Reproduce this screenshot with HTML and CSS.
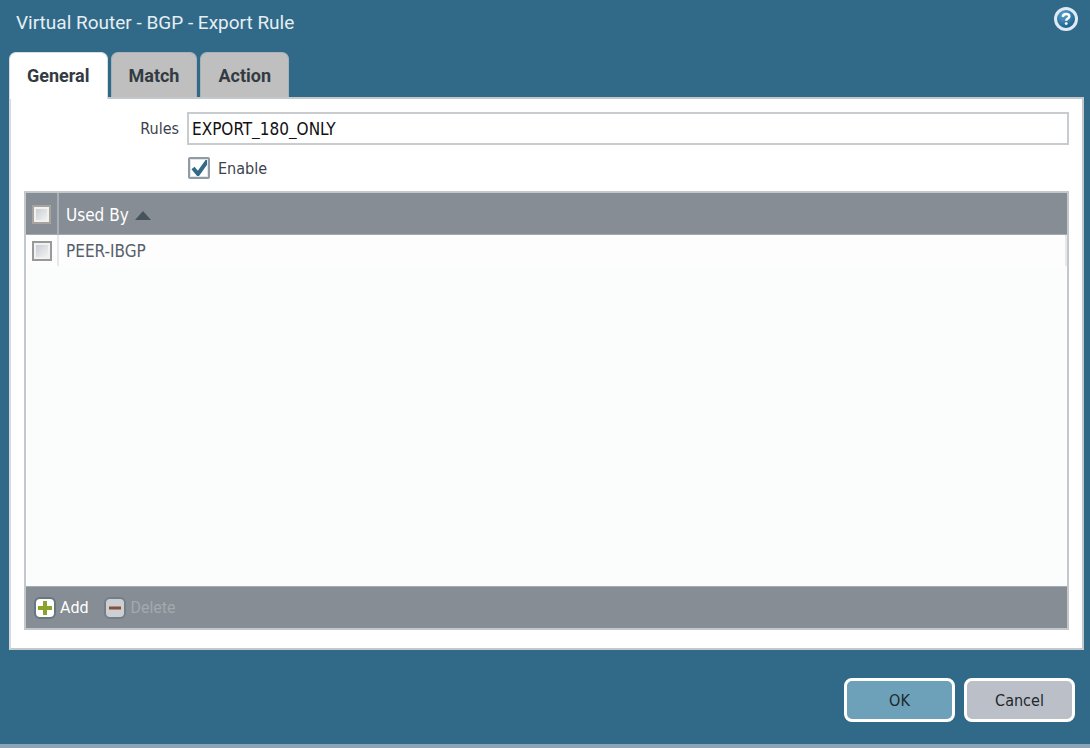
FILE: index.html
```html
<!DOCTYPE html>
<html lang="en">
<head>
    <meta charset="UTF-8">
    <meta name="viewport" content="width=device-width, initial-scale=1.0">
    <title>Virtual Router - BGP - Export Rule</title>
    <link rel="stylesheet" href="styles.css">
</head>
<body>
    <form class="dialog">
        <header class="dialog-header">
            <h1 class="dialog-title">Virtual Router - BGP - Export Rule</h1>
            <button type="button" class="help" aria-label="Help">
                <svg width="26" height="26" viewBox="0 0 26 26">
                    <defs>
                        <radialGradient id="helpFill" cx="0.4" cy="0.3" r="0.75">
                            <stop offset="0" stop-color="#5fa3cd"/>
                            <stop offset="1" stop-color="#0d5583"/>
                        </radialGradient>
                    </defs>
                    <circle cx="13" cy="13" r="10.5" fill="url(#helpFill)" stroke="#dfeaf4" stroke-width="3"/>
                    <path d="M9.8 10.8c.2-2 1.5-2.8 3.3-2.8 2 0 3.2.9 3.2 2.4 0 2.2-3.1 2.1-3.1 4.4" fill="none" stroke="#fff" stroke-width="2.4"/>
                    <circle cx="13.2" cy="17.6" r="1.4" fill="#fff"/>
                </svg>
            </button>
        </header>

        <!-- tabs -->
        <div class="tabs" role="tablist">
            <button type="button" class="tab active" role="tab" aria-selected="true">General</button>
            <button type="button" class="tab" role="tab" aria-selected="false">Match</button>
            <button type="button" class="tab" role="tab" aria-selected="false">Action</button>
        </div>

        <!-- general tab -->
        <main class="panel">
            <div class="field">
                <label class="field-label" for="rules">Rules</label>
                <input class="text-input" id="rules" type="text" value="EXPORT_180_ONLY">
            </div>
            <div class="field field-check">
                <input class="check check-large" id="enable" type="checkbox" checked>
                <label for="enable">Enable</label>
            </div>

            <div class="grid">
                <table class="grid-table">
                    <thead>
                        <tr>
                            <th class="col-check"><input class="check" type="checkbox" aria-label="Select all"></th>
                            <th class="col-name">Used By
                                <svg class="sort" width="16" height="9" viewBox="0 0 16 9"><path d="M8 0l8 9H0z" fill="#47545c"/></svg>
                            </th>
                        </tr>
                    </thead>
                    <tbody>
                        <tr>
                            <td class="col-check"><input class="check" type="checkbox" aria-label="Select PEER-IBGP"></td>
                            <td class="col-name">PEER-IBGP</td>
                        </tr>
                    </tbody>
                </table>
                <div class="toolbar">
                    <button type="button" class="tool">
                        <svg width="22" height="22" viewBox="0 0 22 22">
                            <rect x="1" y="1" width="20" height="20" rx="5" fill="#fff" stroke="#657780" stroke-width="2"/>
                            <path d="M11 4v14M4 11h14" stroke="#8ba32c" stroke-width="4"/>
                        </svg>
                        Add
                    </button>
                    <button type="button" class="tool" disabled>
                        <svg width="22" height="22" viewBox="0 0 22 22">
                            <rect x="1" y="1" width="20" height="20" rx="5" fill="#cdd0d3" stroke="#737f87" stroke-width="2"/>
                            <path d="M5 11h12" stroke="#874f3e" stroke-width="3"/>
                        </svg>
                        Delete
                    </button>
                </div>
            </div>
        </main>

        <footer class="actions">
            <button type="submit" class="btn btn-primary">OK</button>
            <button type="button" class="btn">Cancel</button>
        </footer>
    </form>
</body>
</html>
```
FILE: styles.css
```css
* {
    margin: 0;
    padding: 0;
    box-sizing: border-box;
}

body {
    font-family: Tahoma, "DejaVu Sans Condensed", "DejaVu Sans", sans-serif;
    font-size: 16px;
    color: #3b434c;
}

button,
input {
    font: inherit;
    color: inherit;
}

button {
    border: none;
    background: none;
    cursor: pointer;
}

svg {
    display: block;
}

.dialog {
    display: flex;
    flex-direction: column;
    min-height: 100vh;
    padding: 0 6px 0 9px;
    background: #306a88;
    border-bottom: 4px solid #8ba5b7;
}

.dialog-header {
    display: flex;
    justify-content: space-between;
    padding: 6px 5px 0 7px;
    height: 52px;
}

.dialog-title {
    font-family: Roboto, sans-serif;
    font-size: 19px;
    font-weight: normal;
    line-height: 34px;
    color: #e6eef3;
}

.help {
    height: 26px;
}

/* tabs */
.tabs {
    display: flex;
    gap: 3px;
}

.tab {
    height: 45px;
    padding: 0 17px;
    font-family: Roboto, sans-serif;
    font-size: 18px;
    font-weight: bold;
    color: #333b42;
    background: #bfbfbf;
    border: 1px solid #a9b2b8;
    border-bottom: none;
    border-radius: 7px 7px 0 0;
}

.tab.active {
    margin-bottom: -2px;
    padding-bottom: 2px;
    height: 47px;
    background: #fff;
    border-color: #d5dde2;
    z-index: 1;
}

.panel {
    display: flex;
    flex-direction: column;
    flex: 1;
    padding: 13px 13px 18px;
    background: #fff;
    border: 2px solid #c3c8cb;
    border-left-color: #d5dadd;
}

/* form fields */
.field {
    display: flex;
    align-items: center;
    gap: 8px;
}

.field-label {
    width: 155px;
    text-align: right;
}

.text-input {
    flex: 1;
    height: 33px;
    padding: 0 3px;
    font-size: 17px;
    color: #111;
    border: 2px solid #c9cccf;
}

.field-check {
    height: 46px;
    padding-left: 164px;
}

/* check boxes */
.check {
    appearance: none;
    display: block;
    width: 20px;
    height: 20px;
    background: linear-gradient(135deg, #c3c6cc, #f8f8f8);
    border: 2px solid #999;
    box-shadow: inset 0 0 0 2px #f1f1f1;
}

.check-large {
    width: 22px;
    height: 22px;
    background: #fff;
    border-color: #8f9ba5;
    border-radius: 2px;
    box-shadow: inset 0 0 0 1px #e3e6ea;
}

.check-large:checked {
    background: #fff url("data:image/svg+xml,%3Csvg xmlns='http://www.w3.org/2000/svg' viewBox='0 0 22 22'%3E%3Cpath d='M5 11l5 6L20 3' fill='none' stroke='%23306a88' stroke-width='4'/%3E%3C/svg%3E") border-box center / 22px no-repeat;
}

/* grid */
.grid {
    display: flex;
    flex-direction: column;
    flex: 1;
    background: #fbfdfc;
    border: 2px solid #c3c8cd;
}

.grid-table {
    width: 100%;
    font-size: 17px;
    border-spacing: 0;
}

.grid-table th {
    height: 42px;
    padding-top: 2px;
    font-weight: normal;
    text-align: left;
    color: #fff;
    background: #868d94;
    border-bottom: 1px solid #a4aab0;
}

.grid-table td {
    height: 31px;
    color: #56606b;
    background: #fdfdfd;
}

.grid-table .col-check {
    width: 33px;
    padding-left: 6px;
    border-right: 2px solid #e5e8ec;
}

.grid-table th.col-check {
    border-right-color: #a8aeb6;
}

.grid-table .col-name {
    padding-left: 7px;
}

.grid-table td.col-name {
    border-right: 2px solid #e5e8ec;
}

th .check {
    width: 19px;
    height: 19px;
    border-color: #a7a39f;
}

.sort {
    display: inline-block;
    margin-left: 1px;
    vertical-align: 1px;
}

.toolbar {
    display: flex;
    align-items: center;
    gap: 16px;
    height: 42px;
    margin-top: auto;
    padding-left: 8px;
    background: #868d94;
    border-top: 1px solid #a4aab0;
}

.tool {
    display: flex;
    align-items: center;
    gap: 4px;
    font-family: Roboto, sans-serif;
    font-size: 16px;
    color: #fff;
}

.tool:disabled {
    color: #a4a9ae;
    cursor: default;
}

/* footer buttons */
.actions {
    display: flex;
    justify-content: flex-end;
    gap: 9px;
    padding: 28px 9px 22px;
}

.btn {
    width: 111px;
    height: 44px;
    color: #22282e;
    background: #bbbfc7;
    border: 3px solid #fff;
    border-radius: 8px;
}

.btn-primary {
    background: #6ca1b9;
}
```
